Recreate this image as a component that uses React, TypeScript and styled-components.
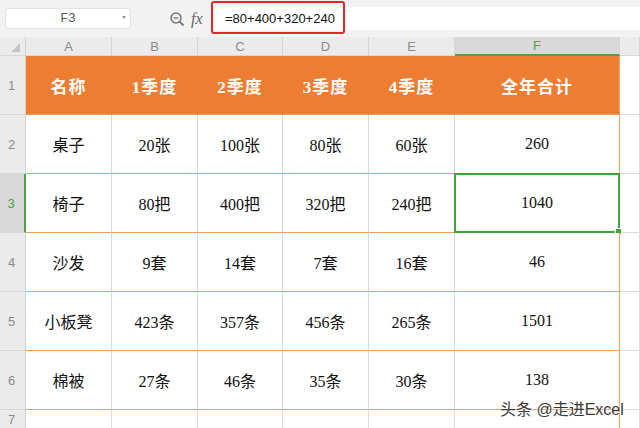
import React from "react";
import styled, { createGlobalStyle } from "styled-components";

const Global = createGlobalStyle`
  html, body { margin: 0; padding: 0; background: #fff; }
  body { width: 640px; height: 428px; overflow: hidden; font-family: "Liberation Sans", Arial, sans-serif; }
`;

const Page = styled.div`
  position: relative;
  width: 640px;
  height: 428px;
  overflow: hidden;
  background: #fff;
`;

const TopBar = styled.div`
  height: 37px;
  background: #f2f2f2;
  display: flex;
  align-items: center;
  box-sizing: border-box;
  padding-left: 5px;
`;

const NameBox = styled.div`
  width: 126px;
  height: 21px;
  box-sizing: border-box;
  background: #fff;
  border: 1px solid #e2e2e2;
  border-radius: 4px;
  display: flex;
  align-items: center;
  justify-content: center;
  position: relative;
  font-family: "Liberation Mono", monospace;
  font-size: 13px;
  color: #555;
`;

const Caret = styled.span`
  position: absolute;
  right: 4px;
  top: 7px;
  width: 0;
  height: 0;
  border-left: 2px solid transparent;
  border-right: 2px solid transparent;
  border-top: 3px solid #999;
`;

const Tools = styled.div`
  display: flex;
  align-items: center;
  gap: 6px;
  margin-left: 38px;
  width: 38px;
`;

const Fx = styled.span`
  font-family: "Liberation Serif", serif;
  font-style: italic;
  font-size: 16px;
  color: #666;
`;

const FormulaWrap = styled.div`
  flex: 1;
  height: 23px;
  background: #fff;
  margin-left: 6px;
  position: relative;
  display: flex;
  align-items: center;
  padding-left: 12px;
  font-family: "Liberation Sans", Arial, sans-serif;
  font-size: 13px;
  color: #111;
`;

const RedBox = styled.div`
  position: absolute;
  left: -2px;
  top: -6px;
  width: 134px;
  height: 33px;
  border: 2px solid #e4262b;
  border-radius: 3px;
  box-sizing: border-box;
`;

const Grid = styled.div`
  display: grid;
  grid-template-columns: 26px 86px 86px 85px 86px 86px 165px 20px;
  grid-template-rows: 19px repeat(6, 59px) 20px;
`;

const ColHead = styled.div<{ $active?: boolean; $corner?: boolean }>`
  background: ${(p) => (p.$active ? "#d9d9d9" : "#ebebeb")};
  border-right: 1px solid ${(p) => (p.$corner ? "#d0d0d0" : "#d6d6d6")};
  border-bottom: ${(p) => (p.$active ? "2px solid #4aa541" : "1px solid #d6d6d6")};
  box-sizing: border-box;
  display: flex;
  align-items: center;
  justify-content: center;
  font-size: 13px;
  color: ${(p) => (p.$active ? "#4aa541" : "#8a8a8a")};
  position: relative;
`;

const CornerMark = styled.span`
  position: absolute;
  right: 5px;
  bottom: 3px;
  width: 0;
  height: 0;
  border-left: 9px solid transparent;
  border-bottom: 9px solid #c4c4c4;
`;

const RowHead = styled.div<{ $active?: boolean }>`
  background: ${(p) => (p.$active ? "#d9d9d9" : "#ebebeb")};
  border-right: ${(p) => (p.$active ? "2px solid #4aa541" : "1px solid #d0d0d0")};
  border-bottom: 1px solid #d6d6d6;
  box-sizing: border-box;
  display: flex;
  align-items: center;
  justify-content: center;
  padding-right: 2px;
  font-size: 13px;
  color: ${(p) => (p.$active ? "#4aa541" : "#8a8a8a")};
`;

const Cell = styled.div<{ $head?: boolean; $last?: boolean; $extra?: boolean }>`
  box-sizing: border-box;
  display: flex;
  align-items: center;
  justify-content: center;
  position: relative;
  background: ${(p) => (p.$head ? "#ed7d31" : "#fff")};
  color: ${(p) => (p.$head ? "#fff" : "#111")};
  font-family: "Liberation Serif", "Noto Sans CJK SC", serif;
  font-size: ${(p) => (p.$head ? "17px" : "16px")};
  font-weight: ${(p) => (p.$head ? 700 : 400)};
  letter-spacing: ${(p) => (p.$head ? "1px" : "0")};
  border-right: 1px solid
    ${(p) => (p.$last ? "#f4a46c" : p.$extra ? "#dcdcdc" : p.$head ? "#ed7d31" : "#d8d8d8")};
  border-bottom: 1px solid ${(p) => (p.$extra ? "#dcdcdc" : "#f09a5c")};
`;

const EmptyCell = styled.div<{ $last?: boolean }>`
  box-sizing: border-box;
  background: #fff;
  border-right: 1px solid ${(p) => (p.$last ? "#f4a46c" : "#dcdcdc")};
  border-bottom: 1px solid #dcdcdc;
`;

const Selection = styled.div`
  position: absolute;
  left: -1px;
  top: -1px;
  right: -1px;
  bottom: -1px;
  border: 2px solid #3fa336;
  pointer-events: none;
`;

const Handle = styled.span`
  position: absolute;
  right: -4px;
  bottom: -4px;
  width: 5px;
  height: 5px;
  background: #3fa336;
  border: 1px solid #fff;
`;

const Watermark = styled.div`
  position: absolute;
  left: 500px;
  top: 396px;
  font-family: "Liberation Sans", "Noto Sans CJK SC", sans-serif;
  font-size: 16px;
  color: #3a3a3a;
  text-shadow: 0 0 2px #fff, 0 0 2px #fff;
`;

const cols = ["A", "B", "C", "D", "E", "F"];
const header = ["名称", "1季度", "2季度", "3季度", "4季度", "全年合计"];
const rows = [
  ["桌子", "20张", "100张", "80张", "60张", "260"],
  ["椅子", "80把", "400把", "320把", "240把", "1040"],
  ["沙发", "9套", "14套", "7套", "16套", "46"],
  ["小板凳", "423条", "357条", "456条", "265条", "1501"],
  ["棉被", "27条", "46条", "35条", "30条", "138"],
];

const ZoomIcon = () => (
  <svg width="16" height="16" viewBox="0 0 16 16" fill="none">
    <circle cx="7" cy="7" r="5" stroke="#777" strokeWidth="1.5" />
    <line x1="4.8" y1="7" x2="9.2" y2="7" stroke="#777" strokeWidth="1.4" />
    <line x1="10.6" y1="10.6" x2="14" y2="14" stroke="#777" strokeWidth="1.8" strokeLinecap="round" />
  </svg>
);

export default function App() {
  return (
    <Page>
      <Global />
      <TopBar>
        <NameBox>
          F3
          <Caret />
        </NameBox>
        <Tools>
          <ZoomIcon />
          <Fx>fx</Fx>
        </Tools>
        <FormulaWrap>
          =80+400+320+240
          <RedBox />
        </FormulaWrap>
      </TopBar>
      <Grid>
        <ColHead $corner>
          <CornerMark />
        </ColHead>
        {cols.map((c) => (
          <ColHead key={c} $active={c === "F"}>
            {c}
          </ColHead>
        ))}
        <ColHead />

        <RowHead>1</RowHead>
        {header.map((h, i) => (
          <Cell key={h} $head $last={i === 5}>
            {h}
          </Cell>
        ))}
        <EmptyCell />

        {rows.map((r, ri) => (
          <React.Fragment key={ri}>
            <RowHead $active={ri === 1}>{ri + 2}</RowHead>
            {r.map((v, ci) => (
              <Cell key={ci} $last={ci === 5}>
                {v}
                {ri === 1 && ci === 5 && (
                  <Selection>
                    <Handle />
                  </Selection>
                )}
              </Cell>
            ))}
            <EmptyCell />
          </React.Fragment>
        ))}

        <RowHead>7</RowHead>
        {cols.map((c, i) => (
          <EmptyCell key={c} $last={i === 5} />
        ))}
        <EmptyCell />
      </Grid>
      <Watermark>头条 @走进Excel</Watermark>
    </Page>
  );
}
